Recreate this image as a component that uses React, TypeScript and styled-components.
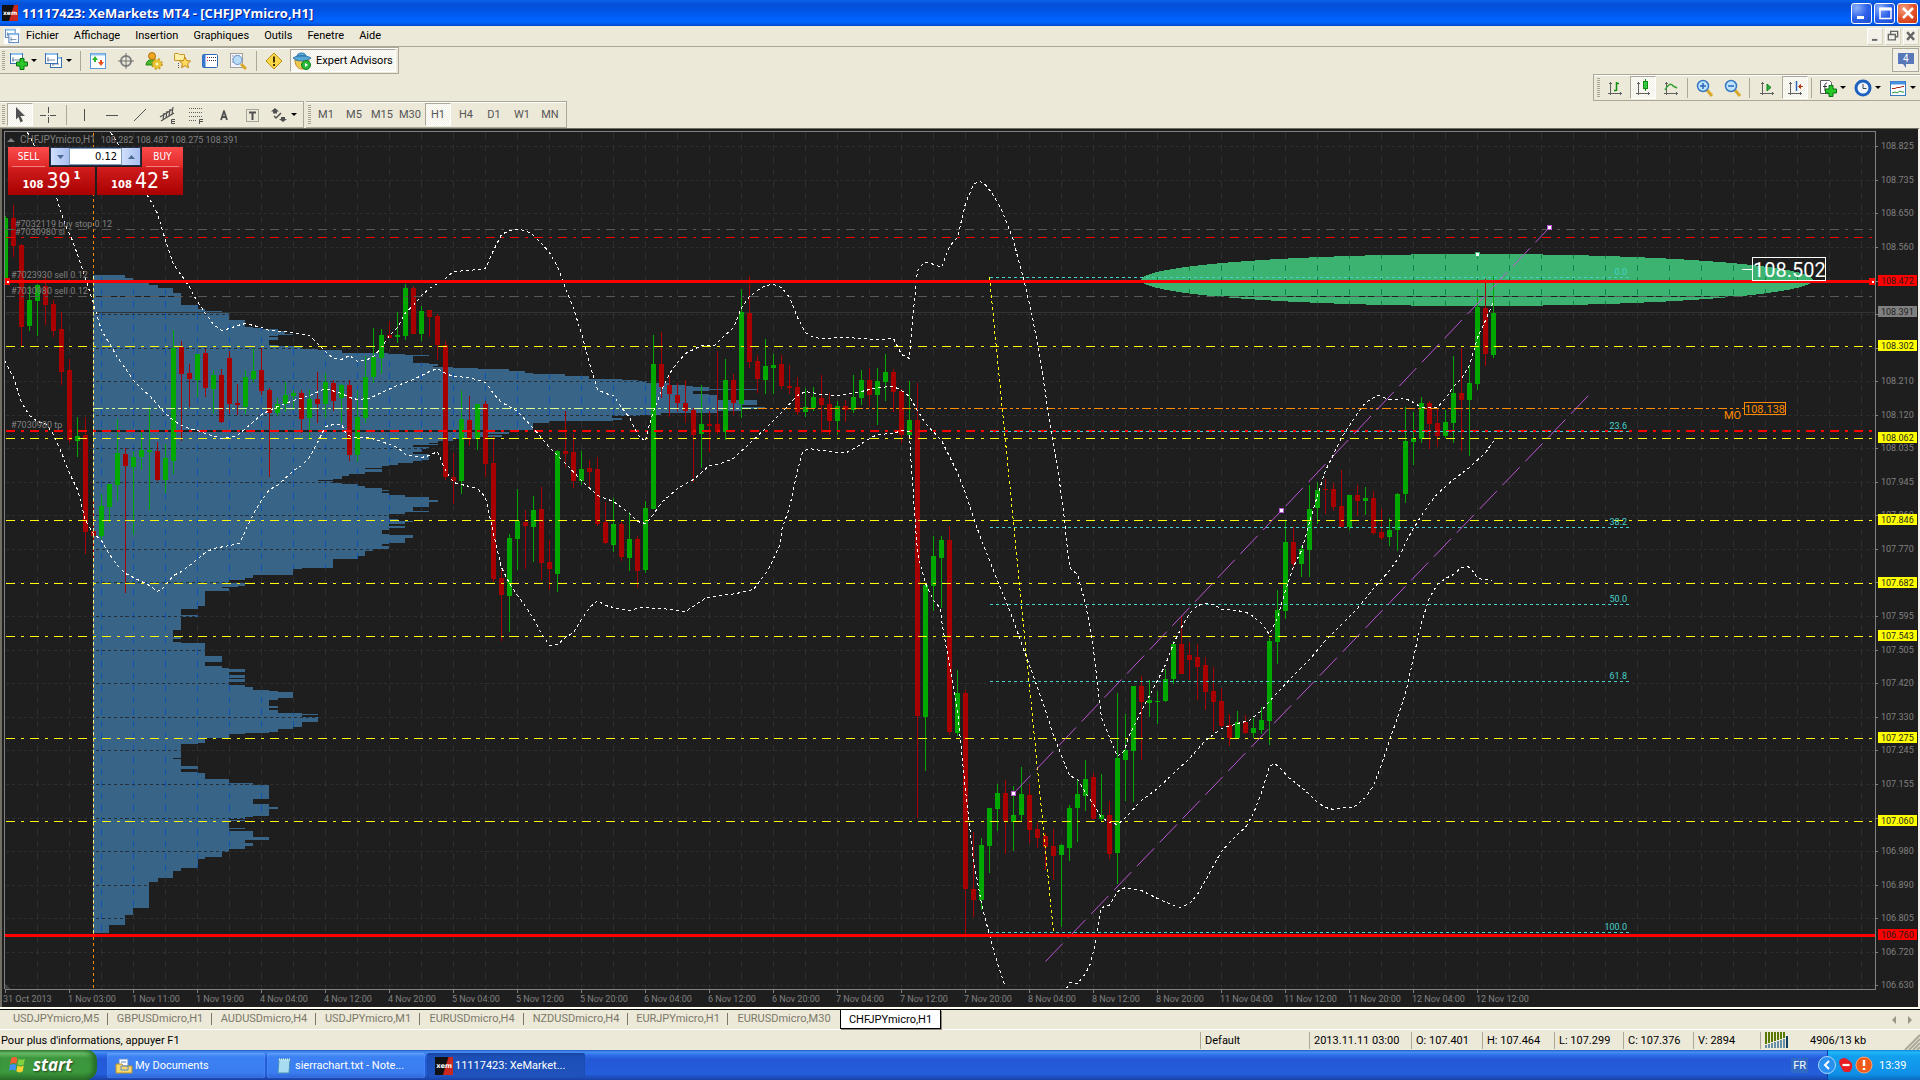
import React from "react";
import styled, { createGlobalStyle, css } from "styled-components";

const UI = 'Roboto, "Open Sans", sans-serif';
const CAPTION = '"DejaVu Sans Condensed", "DejaVu Sans", sans-serif';
const FACE = "#ece9d8";
const SHADOW = "#aca899";

const Global = createGlobalStyle`
  *, *::before, *::after { box-sizing: border-box; }
  html, body, #root { height: 100%; }
  body { margin: 0; overflow: hidden; background: ${FACE}; font-family: ${UI}; font-size: 11px; color: #000; }
  button { font: inherit; color: inherit; margin: 0; padding: 0; border: 0; background: none; }
`;

const Screen = styled.div`
  display: flex;
  flex-direction: column;
  height: 100vh;
  background: ${FACE};
`;

/* ---------- title bar ---------- */

const TitleBar = styled.header`
  display: flex;
  align-items: center;
  gap: 4px;
  height: 26px;
  padding: 0 2px;
  flex: none;
  background: linear-gradient(#0a62e8 0, #0450d8 4px, #0054e3 10px, #0060fc 18px, #0066ff 22px, #0046c8 26px);
`;

const TitleText = styled.h1`
  flex: 1;
  margin: 0;
  font: bold 13px/24px "Open Sans", ${UI};
  color: #fff;
  text-shadow: 1px 1px 0 #0a1883;
  white-space: pre;
`;

const CaptionButton = styled.button<{ $close?: boolean }>`
  display: grid;
  place-items: center;
  width: 21px;
  height: 21px;
  border: 1px solid #fff;
  border-radius: 3px;
  background: ${(p) =>
    p.$close
      ? "radial-gradient(circle at 30% 25%, #f0a080, #e4552c 50%, #c43010)"
      : "radial-gradient(circle at 25% 20%, #8cb0fa, #2e62ea 50%, #1a4bd0)"};
`;

const Captions = styled.div`
  display: flex;
  gap: 2px;
`;

/* ---------- menu ---------- */

const MenuBar = styled.nav`
  display: flex;
  align-items: center;
  height: 21px;
  flex: none;
  padding: 0 1px 0 4px;
  border-bottom: 1px solid ${SHADOW};
`;

const MenuItem = styled.button`
  padding: 0 3px 0 6px;
  margin-right: 6px;
  line-height: 18px;
`;

const MdiButtons = styled.div`
  display: flex;
  gap: 2px;
  margin-left: auto;
`;

const MdiButton = styled.button`
  display: grid;
  place-items: center;
  width: 16px;
  height: 17px;
  background: #f4f2e8;
  border: 1px solid #fff;
  border-right-color: #d8d4c0;
  border-bottom-color: #d8d4c0;
`;

/* ---------- toolbars ---------- */

const ToolRow = styled.div`
  display: flex;
  height: 27px;
  flex: none;
`;

const Divider = styled.i`
  width: 1px;
  height: 20px;
  margin: 0 3px 0 4px;
  background: ${SHADOW};
`;

const Toolbar = styled.div<{ $right?: boolean }>`
  display: flex;
  align-items: center;
  height: 27px;
  padding: 0 2px 0 2px;
  margin-right: 2px;
  border: 1px solid ${SHADOW};
  border-left: 0;
  box-shadow: inset 0 1px 0 #fff;
  ${(p) =>
    p.$right &&
    css`
      margin: 0 0 0 auto;
      padding: 0 0 0 3px;
      border-left: 1px solid ${SHADOW};
      border-right: 0;
      ${Divider} {
        margin: 0 3px 0 2px;
      }
    `}
`;

const Grip = styled.i`
  width: 3px;
  height: 20px;
  margin-right: 1px;
  background: repeating-linear-gradient(#a8a595 0 1px, ${FACE} 1px 2px);
`;

const checker = css`
  background: repeating-conic-gradient(#fff 0 25%, #f1eee2 0 50%) 0 0 / 2px 2px;
  border: 1px solid ${SHADOW};
  border-right-color: #fff;
  border-bottom-color: #fff;
`;

const ToolButton = styled.button<{ $on?: boolean; $drop?: boolean; $text?: boolean }>`
  display: flex;
  align-items: center;
  justify-content: center;
  gap: ${(p) => (p.$text ? "5px" : "3px")};
  height: 23px;
  width: ${(p) => (p.$text ? "auto" : p.$drop ? "35px" : p.$on ? "26px" : "28px")};
  margin: ${(p) => (p.$text ? "0 0 0 2px" : p.$on ? "0 1px" : "0")};
  padding: ${(p) => (p.$text ? "0 2px" : "0")};
  color: ${(p) => (p.$text ? "#000" : "#555")};
  ${(p) => p.$on && checker}
`;

const Caret = styled.i`
  border: 3px solid transparent;
  border-top-color: #000;
  border-bottom: 0;
`;

const Badge = styled.button`
  display: grid;
  place-items: center;
  width: 27px;
  height: 24px;
  margin: 1px 1px 0 auto;
  background: #f2f0e6;
  border: 1px solid ${SHADOW};
`;

/* ---------- chart window ---------- */

const ChartFrame = styled.main`
  position: relative;
  flex: 1;
  min-height: 0;
  border: solid #716f64;
  border-width: 1px 2px 0;
  border-right-color: #f4f2e8;
  background: #1e1e1e;
`;

const ChartSvg = styled.svg`
  display: block;
  width: 100%;
  height: 100%;
  font-family: ${UI};
  font-size: 9px;
`;

const FrameEdge = styled.div`
  height: 2px;
  flex: none;
  background: #fffef0;
`;

const Header = styled.div`
  position: absolute;
  left: 5px;
  top: 3px;
  display: flex;
  align-items: center;
  gap: 5px;
  font-size: 9px;
  line-height: 16px;
  color: #808080;
  white-space: pre;
`;

const SymbolName = styled.span`
  font-size: 10px;
`;

const UpMark = styled.i`
  border: 4px solid transparent;
  border-bottom-color: #808080;
  border-top: 0;
`;

const TradePanel = styled.form`
  position: absolute;
  left: 6px;
  top: 18px;
  display: flex;
  gap: 2px;
`;

const DealButton = styled.button<{ $side: "sell" | "buy" }>`
  display: flex;
  flex-direction: column;
  align-items: ${(p) => (p.$side === "sell" ? "flex-start" : "flex-end")};
  width: ${(p) => (p.$side === "sell" ? "87px" : "86px")};
  height: 48px;
  color: #fff;
  font-family: ${CAPTION};
  background: linear-gradient(#fb4c4c 0, #e02828 20px, #d01c1c 21px, #a80000 48px);
  clip-path: ${(p) =>
    p.$side === "sell"
      ? "polygon(0 0, 41px 0, 41px 20px, 100% 20px, 100% 100%, 0 100%)"
      : "polygon(45px 0, 100% 0, 100% 100%, 0 100%, 0 20px, 45px 20px)"};
`;

const DealName = styled.span`
  width: 33px;
  margin: 0 4px;
  font-size: 10px;
  line-height: 19px;
  text-align: center;
  border-bottom: 1px solid #f08080;
`;

const DealPrice = styled.span`
  display: flex;
  align-items: baseline;
  align-self: center;
  gap: 3px;
  font-size: 21px;
  line-height: 28px;
  b {
    font: bold 10px/12px "DejaVu Sans", sans-serif;
  }
  sup {
    align-self: flex-start;
    font: bold 10px/18px "DejaVu Sans", sans-serif;
  }
`;

const Volume = styled.div`
  position: absolute;
  left: 42px;
  top: 0;
  display: flex;
  width: 91px;
  height: 19px;
  border: 1px solid #26324c;
`;

const VolumeStep = styled.button`
  display: grid;
  place-items: center;
  width: 18px;
  background: linear-gradient(90deg, #d0defc, #a8c0f0);
`;

const VolumeInput = styled.input`
  flex: 1;
  min-width: 0;
  padding: 0 4px;
  border: 1px solid #7f9db9;
  background: #fff;
  font: 11px ${CAPTION};
  text-align: right;
`;

/* ---------- tabs, status bar ---------- */

const Tabs = styled.div`
  display: flex;
  align-items: stretch;
  height: 21px;
  flex: none;
  padding-left: 4px;
  border-top: 1px solid #000;
  border-bottom: 1px solid #fff;
`;

const Tab = styled.button<{ $active?: boolean; $w: number }>`
  position: relative;
  width: ${(p) => p.$w}px;
  color: ${(p) => (p.$active ? "#000" : "#7b786a")};
  line-height: 17px;
  padding-bottom: 2px;
  &::after {
    content: "";
    position: absolute;
    right: 0;
    top: 3px;
    height: 12px;
    border-right: 1px solid #7b786a;
  }
  &:nth-last-of-type(2)::after {
    display: none;
  }
  ${(p) =>
    p.$active &&
    css`
      height: 19px;
      padding: 0;
      background: #fff;
      border: 1px solid #000;
      border-top: 0;
      box-shadow: 1px 1px 0 #8d8a7c;
      &::after {
        display: none;
      }
    `}
`;

const TabArrows = styled.div`
  display: flex;
  gap: 12px;
  align-items: center;
  margin: 0 8px 0 auto;
`;

const StatusBar = styled.footer`
  display: flex;
  height: 20px;
  flex: none;
  padding: 2px 0 1px 1px;
  line-height: 18px;
`;

const StatusCell = styled.span<{ $w?: number }>`
  flex: ${(p) => (p.$w ? "none" : "1")};
  width: ${(p) => (p.$w ? p.$w + "px" : "auto")};
  padding-left: ${(p) => (p.$w ? "4px" : "0")};
  border-left: ${(p) => (p.$w ? `1px solid ${SHADOW}` : "0")};
  white-space: nowrap;
`;

const Traffic = styled(StatusCell)`
  display: flex;
  gap: 21px;
`;

/* ---------- taskbar ---------- */

const TaskBar = styled.footer`
  display: flex;
  align-items: stretch;
  height: 30px;
  flex: none;
  color: #fff;
  background: linear-gradient(#1f56c0 0, #4490f4 2px, #2f70e8 5px, #2458d6 9px, #245edb 24px, #1941a5 30px);
`;

const Start = styled.button`
  display: flex;
  align-items: center;
  gap: 5px;
  width: 97px;
  padding: 0 0 1px 9px;
  margin-right: 10px;
  border-radius: 0 10px 12px 0;
  background: linear-gradient(#3a8b3a 0, #6cc06c 3px, #3c963c 8px, #3c9a3c 22px, #2a702a 30px);
  box-shadow: inset -4px 0 5px #256b25;
  font: italic bold 17px "Open Sans", sans-serif;
  color: #fff;
  text-shadow: 1px 1px 2px #204020;
`;

const Task = styled.button<{ $active?: boolean }>`
  display: flex;
  align-items: center;
  gap: 2px;
  width: 158px;
  height: 25px;
  margin: 3px 2px 0 0;
  padding: 0 8px;
  border-radius: 3px;
  white-space: nowrap;
  background: ${(p) =>
    p.$active
      ? "linear-gradient(#1a44a4, #1c4fb6 4px, #1f52bc)"
      : "linear-gradient(#5f9cfb, #3c81f3 4px, #3a7cf0 20px, #2c64d8)"};
  box-shadow: inset 0 0 1px ${(p) => (p.$active ? "#0c2e78" : "#9cc4ff")};
`;

const Lang = styled.span`
  align-self: center;
  margin: 0 19px 0 auto;
  padding: 0 2px;
  line-height: 15px;
  background: #316ac5;
`;

const Tray = styled.div`
  display: flex;
  align-items: center;
  width: 93px;
  gap: 1px;
  border-left: 1px solid #0a3fa8;
  background: linear-gradient(#0c80d8 0, #20b8f8 2px, #12a0ee 6px, #0f90e8 24px, #0c6ac0 30px);
  svg:first-child {
    margin: 0 1px 0 -10px;
  }
  time {
    margin-left: 5px;
  }
`;

/* ---------- chart data ---------- */

type Candle = [up: 0 | 1, high: number, top: number, bottom: number, low: number];
type Point = [number, number];
/* A run of hourly bars: index of the first bar, y offset of the pane, heights in thirds of a pixel. */
type Run = { first: number; base: number; bars: Candle[] };

const RUNS: Run[] = [
  { first: 0, base: 200, bars: [
    [1,45,52,240,240],[0,12,52,135,168],[0,128,132,377,438],[1,255,297,375,390],[1,248,252,299,405],[0,225,255,311,372],
    [0,297,309,389,408],[0,333,384,513,552],[0,474,507,717,725],[1,648,705,719,768],[0,647,702,993,1058],[0,895,990,1004,1071],
    [1,880,915,1005,1014],[1,850,850,917,965],[1,653,755,852,900],[0,741,759,795,1176],[1,750,767,797,1002],[1,690,747,767,806],
    [1,618,747,752,928],[0,723,750,837,840],[1,730,770,837,876],[1,387,441,779,820],[0,420,438,518,720],[0,489,516,534,618],
    [1,460,460,537,587],[0,444,456,560,588],[1,507,522,563,640],[0,504,522,662,666],[0,450,471,608,640],[0,548,606,611,642],
    [1,507,528,617,640],[1,440,510,534,545],[0,440,507,570,582],[0,561,567,635,828],[1,592,609,635,645],[1,544,582,609,633],
    [1,568,576,585,627],[0,567,576,654,695],[1,567,593,651,717],[0,513,594,609,666],[1,516,543,609,650],[0,537,546,600,630],
    [1,550,552,592,666],[0,537,552,762,780],[1,567,648,762,783],[1,465,528,651,665],[1,381,468,528,546],[1,384,402,471,519],
    [0,360,402,411,411],[1,333,402,408,426],[1,248,261,405,416],[0,255,261,399,399],[1,315,330,399,420],[0,327,327,348,408],
    [0,339,345,432,477],[0,420,432,828,836],[0,755,828,840,910],[1,570,654,840,880],[0,585,657,714,735],[1,609,609,714,747],
    [0,600,609,789,827],[0,706,786,1133,1142],[0,1105,1131,1182,1320],[1,999,1011,1185,1293],[1,864,960,1014,1107],[0,927,963,975,1104],
    [1,885,927,978,1083],[0,858,924,1085,1137],[0,1017,1083,1104,1168],[1,747,750,1119,1173],[0,630,750,759,797],[0,699,753,839,861],
    [1,750,804,839,851],[0,777,801,812,857],[0,768,804,969,974],
  ] },
  { first: 75, base: 160, bars: [
    [0,1023,1083,1146,1150],[1,1012,1089,1152,1173],[0,1083,1089,1188,1200],[1,1052,1134,1191,1230],[0,1126,1134,1229,1280],
    [1,1020,1041,1226,1236],[1,522,609,1044,1044],[0,513,609,678,710],[0,645,672,699,768],[0,667,702,726,752],[0,657,726,750,786],
    [0,741,747,822,963],[1,672,789,819,921],[0,750,789,795,874],[0,570,789,813,819],[1,594,657,813,836],[0,639,657,726,762],
    [1,384,453,730,770],[0,345,456,603,621],[0,582,600,654,696],[1,534,615,657,699],[1,579,612,621,699],[0,582,609,675,684],
    [0,612,675,681,699],[0,648,678,753,762],[1,682,738,753,768],[1,678,708,741,750],[0,642,711,732,815],[0,696,729,780,822],
    [1,720,735,780,822],[0,716,735,747,783],[1,642,708,747,756],[1,627,657,711,733],[0,621,657,702,738],[1,621,660,702,792],
    [1,579,633,663,720],[0,624,633,693,753],[0,684,690,822,846],[1,660,777,822,822],[0,666,777,1665,1971],
  ] },
  { first: 115, base: 540, bars: [
    [1,132,132,528,690],[1,-15,45,135,210],[1,-14,-3,51,201],[0,-45,-3,573,582],[1,387,456,576,585],[0,447,456,1044,1180],
    [0,873,1044,1077,1128],[1,891,912,1077,1107],[1,800,801,915,996],[1,729,756,804,870],[0,717,756,840,939],[1,735,822,843,930],
    [1,678,759,822,840],[0,729,762,867,906],[0,845,864,891,921],[0,876,885,918,988],[0,864,915,945,1017],[1,909,912,942,1158],
    [1,792,801,921,960],[1,717,759,801,903],[1,657,714,766,810],[0,696,708,834,834],[1,699,822,834,843],[0,780,822,939,953],
    [1,456,651,936,1029],[1,519,627,657,780],[1,435,435,630,783],[0,405,435,483,657],[1,417,477,486,528],[1,450,480,483,549],
    [1,384,414,480,483],[1,300,309,414,430],[0,225,309,399,399],[0,304,342,357,418],[0,309,348,378,477],[0,348,372,453,507],
    [0,378,450,483,570],[0,441,480,555,564],[0,519,552,591,615],[1,510,543,591,594],[0,522,543,576,580],[1,531,561,576,592],
    [1,498,537,567,579],[1,290,300,540,612],
  ] },
  { first: 159, base: 200, bars: [
    [1,1167,1227,1323,1390],[1,960,1023,1230,1254],[0,978,1023,1089,1104],[1,1035,1044,1089,1128],[1,852,924,1047,1128],[1,843,867,921,969],
    [0,833,864,867,939],[0,846,864,918,930],[0,807,915,978,978],[1,882,882,978,987],[0,852,882,900,945],[1,858,891,900,942],
    [0,870,891,996,1001],[0,924,993,1011,1017],[1,951,987,1008,1035],[1,876,879,987,1050],[1,618,720,879,906],[1,633,711,723,792],
    [1,588,606,714,726],[0,600,606,669,744],[0,624,666,705,738],[1,627,663,705,712],[1,465,576,666,726],[0,441,576,597,750],
    [1,492,546,597,765],[1,279,318,549,567],[0,234,321,459,495],[1,225,336,462,471],
  ] },
];

const third = (base: number, v: number) => base + Math.round(v / 3);

function candlePath(up: 0 | 1, part: "wick" | "body") {
  let d = "";
  for (const run of RUNS) {
    run.bars.forEach((bar, i) => {
      if (bar[0] !== up) return;
      const x = 5 + 8 * (run.first + i);
      const a = third(run.base, part === "wick" ? bar[1] : bar[2]);
      const b = third(run.base, part === "wick" ? bar[4] : bar[3]);
      d += `M${x} ${a}V${Math.max(b, a + 1)}`;
    });
  }
  return d;
}

/* Band pieces: pane offset x, pane offset y, horizontal density, points. */
type Piece = [number, number, number, Point[]];

const UPPER: Piece[] = [
  [0, 0, 3, [[330,395],[345,418],[365,450],[400,520],[450,600]]],
  [0, 200, 2.45, [[368,0],[385,38],[405,120],[425,193],[445,225],[462,255],[480,295],[503,340],[523,372],[543,390],[562,384],[582,376],[601,370],[641,382],[660,389],[700,394],[758,406],[797,452],[817,474],[837,478],[856,466],[876,484],[895,480],[915,468],[935,440],[954,405],[974,380],[993,335],[1013,315],[1033,285],[1052,263],[1072,250],[1091,234],[1111,214],[1150,211],[1189,205],[1209,150],[1229,102],[1248,90],[1268,86],[1287,90],[1307,106],[1327,130],[1346,157],[1366,197],[1385,265],[1405,325],[1425,400],[1444,490],[1464,568],[1483,578],[1503,584],[1523,620],[1542,650]]],
  [600, 160, 2.45, [[92,822],[111,842],[119,800],[131,752],[151,690],[170,640],[190,605],[209,580],[229,567],[249,556],[280,554],[300,530],[327,500],[347,440],[366,408],[386,390],[405,376],[425,372],[445,382],[464,410],[484,470],[503,516],[523,530],[543,533],[601,532],[680,536],[719,535],[739,582],[758,595],[766,480],[778,330],[790,312],[800,307],[820,312],[837,322],[856,258],[876,230],[895,130],[915,72],[928,62],[940,66],[960,95],[980,140],[997,185],[1013,240],[1025,300],[1040,365],[1060,470],[1080,600],[1100,760],[1120,920],[1135,1050]]],
  [880, 540, 2.45, [[457,0],[462,50],[466,85],[485,103],[503,190],[515,270],[525,350],[535,460],[543,530],[562,590],[582,648],[598,630],[610,590],[640,510],[660,465],[680,420],[700,372],[719,310],[739,262],[758,220],[778,195],[797,190],[820,192],[837,207],[876,211],[905,220],[935,250]]],
  [1240, 200, 2.306, [[68,1303],[86,1250],[105,1170],[123,1098],[142,1050],[160,965],[179,885],[197,810],[215,762],[234,712],[252,676],[271,638],[289,606],[308,590],[320,585],[345,596],[363,598],[382,594],[400,607],[418,621],[455,620],[474,594],[492,558],[511,535],[529,495],[547,410],[566,360],[585,303]]],
];

const MIDDLE: Piece[] = [
  [0, 0, 3, [[82,395],[100,430],[130,510],[168,590],[182,630]]],
  [0, 200, 2.45, [[160,75],[178,120],[195,180],[209,235],[229,310],[249,390],[268,430],[288,470],[307,505],[327,540],[347,565],[366,585],[386,612],[405,640],[425,660],[445,675],[464,685],[484,690],[503,700],[543,714],[582,704],[601,685],[641,641],[680,618],[719,600],[758,586],[797,564],[837,579],[856,592],[876,597],[905,594],[935,576],[974,555],[1013,538],[1052,514],[1072,505],[1091,518],[1111,527],[1150,531],[1189,546],[1209,578],[1229,606],[1248,618],[1268,633],[1307,684],[1346,740],[1385,790],[1425,840],[1464,885],[1503,904],[1542,938]]],
  [600, 160, 2.45, [[92,1084],[111,1088],[123,1075],[150,1027],[190,984],[229,957],[268,916],[290,911],[327,893],[366,850],[405,805],[445,755],[484,705],[503,692],[543,701],[582,704],[601,703],[640,692],[680,680],[719,678],[739,690],[758,707],[778,750],[797,790],[837,840],[876,935],[895,1000],[915,1070],[935,1140]]],
  [880, 540, 2.45, [[268,60],[288,120],[307,180],[327,240],[347,310],[366,375],[386,440],[405,510],[425,585],[445,645],[464,705],[484,718],[503,755],[523,792],[543,830],[562,846],[582,852],[601,830],[640,780],[680,745],[719,700],[758,655],[797,600],[837,564],[876,548],[905,540],[935,510],[974,455],[1013,405],[1052,358],[1091,300],[1131,253],[1170,205],[1209,145],[1248,90],[1272,48]]],
  [1240, 200, 2.306, [[382,1025],[400,985],[418,945],[437,910],[455,880],[492,838],[529,800],[566,755],[585,722]]],
];

const LOWER: Piece[] = [
  [0, 200, 2.45, [[12,480],[33,530],[53,605],[72,645],[92,663],[111,670],[131,702],[151,755],[170,820],[190,868],[209,960],[229,1000],[249,1020],[268,1062],[288,1095],[307,1118],[327,1130],[347,1143],[366,1156],[386,1172],[400,1160],[425,1125],[445,1113],[464,1095],[503,1055],[523,1044],[562,1035],[586,1028],[601,990],[621,940],[641,900],[660,868],[680,854],[719,810],[739,795],[758,770],[778,725],[797,678],[817,672],[837,672],[846,695],[860,712],[900,710],[935,724],[974,740],[993,762],[1033,770],[1052,766],[1072,752],[1091,810],[1111,845],[1131,852],[1150,858],[1170,864],[1189,890],[1209,1000],[1229,1100],[1248,1150],[1268,1185],[1282,1210],[1307,1255],[1327,1300],[1346,1335],[1366,1333],[1385,1310],[1405,1297],[1425,1258],[1444,1222],[1464,1200],[1483,1215],[1503,1222],[1542,1231],[1568,1220],[1620,1224],[1680,1233],[1730,1191],[1805,1179],[1845,1167],[1884,1107],[1913,1029]]],
  [600, 160, 2.45, [[445,1110],[464,1040],[484,930],[495,875],[510,865],[543,869],[582,877],[603,877],[625,860],[660,835],[680,822],[719,818],[739,810],[758,812],[760,880],[770,1050]]],
  [880, 540, 2.45, [[89,0],[95,50],[111,130],[131,180],[147,205],[151,240],[170,375],[190,510],[209,750],[229,960],[249,1090],[268,1185],[288,1270],[307,1340]]],
];

const LOWER_RIGHT: Piece[] = [
  [880, 540, 2.45, [[457,1343],[464,1325],[484,1330],[503,1300],[515,1270],[525,1220],[535,1150],[543,1100],[562,1094],[582,1053],[601,1040],[640,1050],[680,1073],[719,1095],[735,1100],[758,1088],[778,1062],[797,1020],[817,975],[837,933],[857,905],[880,876],[895,862],[915,820],[935,755],[954,677],[966,670],[978,680],[1000,710],[1033,740],[1052,762],[1072,785],[1091,800],[1111,808],[1131,802],[1160,800],[1189,770],[1209,735],[1229,672],[1248,600],[1268,530],[1287,460],[1307,350],[1327,245],[1346,170],[1366,132],[1385,115],[1405,103],[1425,82],[1437,77],[1446,82],[1464,115],[1500,119]]],
];

const bandPath = (pieces: Piece[]) =>
  "M" +
  pieces
    .flatMap(([ox, oy, k, pts]) => pts.map(([x, y]) => `${Math.floor(ox + x / k)} ${third(oy, y)}`))
    .join("L");

/* Market profile steps: [y, right edge]. */
const PROFILE: Array<[number, Point[]]> = [
  [200, [[225,307],[234,327],[243,366],[254,386],[263,425],[278,443],[315,484],[327,503],[333,543],[336,503],[339,562],[360,601],[381,621],[385,641],[388,680],[393,699],[402,719],[406,680],[409,660],[411,680],[420,660],[435,680],[438,739],[447,778],[450,837],[459,876],[460,950],[463,993],[465,1052],[468,1013],[489,1052],[492,1072],[498,1060],[501,1111],[504,1170],[507,1248],[513,1287],[519,1307],[522,1385],[528,1444],[537,1523],[540,1562],[543,1584],[546,1582],[549,1638],[554,1680],[558,1699],[561,1738],[567,1855],[570,1738],[573,1699],[582,1738],[585,1758],[600,1855],[615,1817],[621,1875],[627,1817],[633,1758],[639,1620],[645,1568],[647,1500],[654,1523],[660,1503],[663,1346],[669,1307],[690,1268],[696,1248],[702,1190],[705,1229],[711,1170],[717,1111],[723,1072],[729,1052],[732,1072],[735,1013],[741,1052],[747,1033],[756,1013],[763,1052],[780,1033],[783,1013],[789,974],[795,954],[799,935],[804,895],[807,935],[815,895],[822,856],[828,837],[837,817],[840,778],[844,817],[849,837],[852,876],[858,895],[864,935],[870,954],[873,935],[878,954],[884,993],[890,1033],[891,1052],[900,1072],[906,1052],[921,1013],[933,1052],[936,993],[943,954],[957,974],[963,1013],[966,993],[972,954],[978,993],[984,954],[990,935],[1002,954],[1005,1013],[1014,993],[1028,954],[1032,935],[1038,954],[1047,915],[1053,895],[1068,876],[1077,817],[1104,739],[1107,719],[1125,621],[1134,601],[1140,562],[1150,601],[1158,582],[1162,543],[1165,562],[1173,503]]],
  [600, [[0,503],[18,484],[27,443],[45,484],[51,443],[90,425],[111,443],[117,425],[126,443],[129,503],[168,543],[186,503],[198,543],[204,562],[207,601],[216,562],[225,601],[234,562],[237,601],[246,562],[255,601],[261,621],[270,660],[273,680],[276,719],[294,680],[300,660],[318,680],[324,660],[330,680],[339,739],[342,778],[345,739],[351,778],[366,739],[381,719],[387,680],[396,660],[399,601],[402,562],[414,503],[429,484],[432,443],[474,425],[477,443],[498,484],[507,443],[516,484],[519,503],[537,562],[549,621],[555,660],[597,621],[612,660],[621,680],[627,660],[648,621],[651,601],[657,562],[660,601],[663,562],[684,601],[687,562],[693,621],[711,660],[720,601],[729,621],[738,601],[747,562],[756,543],[771,503],[777,484],[804,443],[813,425],[834,386],[846,366],[924,327],[945,307],[975,268]]],
];

const profilePath =
  "M93 275" +
  PROFILE.flatMap(([base, rows]) => rows.map(([y, x]) => `V${third(base, y)}H${Math.round(x / 2.45)}`)).join("") +
  "V933H93Z";

const GRID_X = Array.from({ length: 58 }, (_, i) => 37 + 32 * i);
const GRID_Y = [146, 180, 213, 247, 281, 314, 348, 381, 415, 448, 482, 515, 549, 582, 616, 650, 683, 717, 750, 784, 818, 851, 885, 918, 952, 985];
const gridX = GRID_X.filter((x) => x < 1875).map((x) => `M${x} 132V989`).join("");
const gridY = GRID_Y.map((y) => `M5 ${y}H1875`).join("");

const PRICES: Array<[string, number]> = [
  ["108.825", 146], ["108.735", 180], ["108.650", 213], ["108.560", 247], ["108.210", 381], ["108.120", 415], ["108.035", 448],
  ["107.945", 482], ["107.860", 515], ["107.770", 549], ["107.595", 616], ["107.505", 650], ["107.420", 683], ["107.330", 717],
  ["107.245", 750], ["107.155", 784], ["106.980", 851], ["106.890", 885], ["106.805", 918], ["106.720", 952], ["106.630", 985],
];
const MARKS: Array<[string, number, string]> = [
  ["108.472", 281, "#ff0000"], ["108.391", 312, "#808080"], ["108.302", 346, "#ffff00"], ["108.062", 438, "#ffff00"],
  ["107.846", 520, "#ffff00"], ["107.682", 583, "#ffff00"], ["107.543", 636, "#ffff00"], ["107.275", 738, "#ffff00"],
  ["107.060", 821, "#ffff00"], ["106.760", 935, "#ff0000"],
];
const LEVELS = MARKS.filter((m) => m[2] === "#ffff00").map((m) => m[1]);
const FIB: Array<[string, number]> = [["0.0", 277], ["23.6", 431], ["38.2", 527], ["50.0", 604], ["61.8", 681], ["100.0", 932]];
const TIMES = [
  "31 Oct 2013", "1 Nov 03:00", "1 Nov 11:00", "1 Nov 19:00", "4 Nov 04:00", "4 Nov 12:00", "4 Nov 20:00", "5 Nov 04:00",
  "5 Nov 12:00", "5 Nov 20:00", "6 Nov 04:00", "6 Nov 12:00", "6 Nov 20:00", "7 Nov 04:00", "7 Nov 12:00", "7 Nov 20:00",
  "8 Nov 04:00", "8 Nov 12:00", "8 Nov 20:00", "11 Nov 04:00", "11 Nov 12:00", "11 Nov 20:00", "12 Nov 04:00", "12 Nov 12:00",
];
const ORDERS: Array<[string, number, number]> = [
  ["#7030980 sl", 15, 235], ["#7032119 buy stop 0.12", 15, 227], ["#7023930 sell 0.12", 11, 278],
  ["#7030980 sell 0.12", 11, 294], ["#7030980 tp", 11, 428],
];

function Handle({ x, y, c }: { x: number; y: number; c: string }) {
  return <rect x={x - 1} y={y - 1} width="4" height="4" fill="#fff" stroke={c} strokeWidth="1" />;
}

function PriceChart() {
  const dashDot = "9 6 3 6";
  return (
    <ChartSvg viewBox="2 129 1916 878" preserveAspectRatio="xMinYMin meet" role="img" aria-label="CHFJPYmicro H1">
      <defs>
        <clipPath id="profile"><path d={profilePath} /></clipPath>
        <clipPath id="zone"><ellipse cx="1477" cy="280" rx="336" ry="26" /></clipPath>
        <clipPath id="plot"><rect x="5" y="132" width="1870" height="857" /></clipPath>
      </defs>
      <rect x="2" y="129" width="1916" height="878" fill="#1e1e1e" />
      <g clipPath="url(#plot)" shapeRendering="crispEdges" fill="none">
        <g transform="translate(.5 .5)" stroke="#2e2e2e">
          <path d={gridX} strokeDasharray="6 6" />
          <path d={gridY} strokeDasharray="3 3" />
        </g>
        <path d={profilePath} fill="#386487" />
        <g clipPath="url(#profile)">
          <g transform="translate(.5 .5)">
            <path d={gridX} stroke="#0f54b0" strokeDasharray="6 6" />
            <path d={gridY} stroke="#26303a" strokeDasharray="3 3" />
            <path d="M93 296H1875" stroke="#1e1e1e" />
            <path d="M93 430.5H1875" stroke="#1e1e1e" strokeWidth="2" />
          </g>
        </g>
        <ellipse cx="1477" cy="280" rx="336" ry="26" fill="#3cb371" />
        <g clipPath="url(#zone)">
          <g transform="translate(.5 .5)">
            <path d={gridX} stroke="#128445" strokeDasharray="6 6" />
            <path d="M5 296H1875" stroke="#1e1e1e" />
          </g>
        </g>
        <g transform="translate(.5 .5)">
          <path d="M5 312H1875" stroke="#333" />
          <path d={candlePath(0, "wick")} stroke="#a80000" />
          <path d={candlePath(0, "body")} stroke="#a80000" strokeWidth="5" />
          <path d={candlePath(1, "wick")} stroke="#00a800" />
          <path d={candlePath(1, "body")} stroke="#00a800" strokeWidth="5" />
          <path d="M5 229H1875M5 296H1875" stroke="#585858" strokeDasharray={dashDot} />
          <path d="M5 237H1875" stroke="#f00" strokeDasharray={dashDot} />
          <path d="M93 132V989" stroke="#ff8c00" strokeDasharray="3 3" />
          <path d="M93 275V932" stroke="#e8ff90" strokeDasharray="3 3" />
          <path d="M93 408H757" stroke="#d8ff90" strokeDasharray="9 3 3 3 3 3" />
          <path d="M757 408H1744" stroke="#ff8c00" strokeDasharray="9 3 3 3 3 3" />
          <path d="M5 430.5H1875" stroke="#f00" strokeWidth="2" strokeDasharray={dashDot} />
          <path d={LEVELS.map((y) => `M5 ${y}H1875`).join("")} stroke="#ff0" strokeDasharray={dashDot} />
          <path d={FIB.map((f) => `M989 ${f[1]}H1628`).join("")} stroke="#48d1cc" strokeDasharray="3 3" />
          <path d="M989 277L1053 932" stroke="#ff0" strokeDasharray="3 3" />
          <path d="M1013 793L1549 227M1045 961L1588 395" stroke="#ba55d3" strokeDasharray="25 8" shapeRendering="auto" />
          <g stroke="#fff" strokeDasharray="3 3">
            <path d={bandPath(UPPER)} />
            <path d={bandPath(MIDDLE)} />
            <path d={bandPath(LOWER)} />
            <path d={bandPath(LOWER_RIGHT)} />
          </g>
        </g>
      </g>
      <g fill="#808080">
        {ORDERS.map(([t, x, y]) => <text key={t} x={x} y={y}>{t}</text>)}
      </g>
      <g shapeRendering="crispEdges">
        <path d="M5 281.500H1875M5 935.500H1875" stroke="#f00" strokeWidth="3" />
        <rect x="5" y="278" width="5" height="7" fill="#f00" /><rect x="7" y="281" width="2" height="2" fill="#fff" />
        <rect x="1869" y="278" width="6" height="7" fill="#f00" /><rect x="1872" y="281" width="2" height="2" fill="#fff" />
        <Handle x={1476} y={253} c="#3cb371" />
        <Handle x={1548} y={226} c="#ba55d3" />
        <Handle x={1280} y={509} c="#ba55d3" />
        <Handle x={1012} y={792} c="#ba55d3" />
        <path d="M4.500 989V131.500H1875.500V989.500H4.500" fill="none" stroke="#808080" />
        <path d={GRID_Y.map((y) => `M1876 ${y}.500h2`).join("") + TIMES.map((_, i) => `M${5 + 64 * i}.500 990v3`).join("")} stroke="#808080" />
        <path d="M5 989v-5l5 5z" fill="#404040" />
        <rect x="1752.500" y="257.500" width="73" height="23" fill="none" stroke="#fff" />
        <path d="M1742 269.500h10" stroke="#fff" />
        <rect x="1744.500" y="402.500" width="41" height="12" fill="none" stroke="#ff8c00" />
      </g>
      <g fill="#48d1cc" textAnchor="end">
        {FIB.map(([t, y]) => <text key={t} x="1627" y={y - 2}>{t}</text>)}
      </g>
      <text x="1753" y="277" fill="#fff" fontSize="20">108.502</text>
      <text x="1745" y="413" fill="#ff8c00" fontSize="11">108.138</text>
      <text x="1724" y="419" fill="#ff8c00" fontSize="11">MO</text>
      <g fill="#808080">
        {PRICES.map(([t, y]) => <text key={t} x="1881" y={y + 3}>{t}</text>)}
        {TIMES.map((t, i) => <text key={t} x={i ? 4 + 64 * i : 3} y="1002">{t}</text>)}
      </g>
      {MARKS.map(([t, y, c]) => (
        <g key={t}>
          <rect x="1878" y={y - 6} width="39" height="11" fill={c} />
          <text x="1881" y={y + 3} fill="#1e1e1e">{t}</text>
        </g>
      ))}
    </ChartSvg>
  );
}

/* ---------- icons ---------- */

function Glyph({ s = 18, label, children }: { s?: number; label?: string; children: React.ReactNode }) {
  return (
    <svg width={s} height={s} viewBox="0 0 18 18" fill="none" aria-label={label} aria-hidden={!label}>
      {children}
    </svg>
  );
}

const Brand = ({ s = 16 }: { s?: number }) => (
  <svg width={s} height={s} viewBox="0 0 16 16" aria-hidden>
    <rect width="16" height="16" fill="#111" />
    <path d="M16 0v16H7L12 0z" fill="#c8281e" />
    <text x="1" y="10" fontSize="6" fontWeight="bold" fill="#fff" fontFamily="DejaVu Sans">xem</text>
  </svg>
);

const Win = ({ x = 1, y = 2, w = 12, h = 10 }) => (
  <>
    <rect x={x + 0.5} y={y + 0.5} width={w} height={h} fill="#fff" stroke="#3a70b0" />
    <path d={`M${x + 1} ${y + 1}h${w - 1}`} stroke="#8fc0f0" strokeWidth="2" />
    <path d={`M${x + 3} ${y + 4}v${h - 5}M${x + 2} ${y + h - 3}h${w - 4}`} stroke="#7088a8" />
  </>
);
const Plus = ({ x = 6, y = 6 }) => (
  <path transform={`translate(${x} ${y})`} d="M4 .5h4v3.500h3.500v4H8v3.500H4V8H.5V4H4z" fill="#28c828" stroke="#0a7010" />
);
const axes = <path d="M4.500 3v13M2 14.500h14M3 4.500h3M14.500 13v3" stroke="#606060" />;

const NewChart = <Glyph><Win x={0} y={1} /><Plus /></Glyph>;
const Profiles = <Glyph><Win x={5} y={5} w={11} h={10} /><Win x={0} y={1} w={12} h={10} /></Glyph>;
const Market = <Glyph><rect x="1.500" y="1.500" width="15" height="15" fill="#fff" stroke="#5a9ad8" /><path d="M2 2.500h14" stroke="#8fc0f0" strokeWidth="2" /><path d="M6 4l3 4H7v2H5V8H3z" fill="#2cb82c" /><path d="M12 14l-3-4h2V8h2v2h2z" fill="#e8501c" /></Glyph>;
const Target = <Glyph><circle cx="9" cy="9" r="5" stroke="#808080" strokeWidth="2" /><path d="M9 1v16M1 9h16" stroke="#707070" /></Glyph>;
const Navigator = <Glyph><path d="M1 13c0-7 11-7 11 0z" fill="#48b828" stroke="#2a8818" /><circle cx="7" cy="4" r="3.500" fill="#f0a820" stroke="#b07010" /><circle cx="12" cy="12" r="3" fill="#fff8c0" stroke="#e8c030" strokeWidth="3" /><circle cx="12" cy="12" r="5" stroke="#c89818" strokeWidth="1.500" strokeDasharray="2 2" /></Glyph>;
const Favorites = <Glyph><path d="M1.500 2.500V1.500h4l1 1h5v6h-10z" fill="#fff0a8" stroke="#c89830" /><path d="M5.500 11v6" stroke="#555" strokeDasharray="1 1" /><path d="M12 5l1.600 3.600 4 .4-3 2.700.9 4-3.500-2-3.500 2 .9-4-3-2.700 4-.4z" fill="#ffd860" stroke="#c08818" /></Glyph>;
const Terminal = <Glyph><rect x="1.500" y="2.500" width="15" height="13" rx="1" fill="#fff" stroke="#2a68b8" /><path d="M3 3v12" stroke="#3878d0" strokeWidth="3" /><path d="M6 5.500h1M6 8.500h1" stroke="#e02020" /><path d="M8 5.500h7M8 8.500h7" stroke="#333" strokeDasharray="1 1" /></Glyph>;
const Tester = <Glyph><rect x="1.500" y="1.500" width="12" height="14" fill="#f4f4fa" stroke="#a0a0a0" /><path d="M4 3v9M7 3v9M10 3v9" stroke="#8898b8" strokeDasharray="2 1" /><circle cx="8.500" cy="8" r="4.500" fill="#b8dcf8" stroke="#6890c8" /><path d="M12 12l5 5" stroke="#d8a828" strokeWidth="3" /></Glyph>;
const Order = <Glyph><path d="M9 1l8 8-8 8-8-8z" fill="#f8d848" stroke="#c09010" /><path d="M9 4.500v6M9 12v2" stroke="#403000" strokeWidth="2" /></Glyph>;
const Expert = <Glyph><path d="M2 8c0 12 14 12 14 0z" fill="#f0c850" stroke="#c08820" /><path d="M0 6c5-3 13-3 18 0-4 4-14 4-18 0zM4 4c0-4 9-4 9 0z" fill="#58a8d8" stroke="#3078a8" /><circle cx="13" cy="13" r="4.500" fill="#28b838" stroke="#108020" /><path d="M12 11v4l3-2z" fill="#fff" /></Glyph>;
const Bars = <Glyph>{axes}<path d="M10.500 3v9M10 4.500h3M8 11.500h2" stroke="#109010" strokeWidth="1.500" /></Glyph>;
const Candles = <Glyph>{axes}<path d="M11.500 0v12" stroke="#109010" /><rect x="9.500" y="2.500" width="4" height="7" fill="#30c840" stroke="#109010" /></Glyph>;
const LineIcon = <Glyph>{axes}<path d="M3 11c3-6 6-7 8-4l4 2" stroke="#30a030" strokeWidth="1.500" /></Glyph>;
const Lens = ({ plus }: { plus?: boolean }) => <Glyph><path d="M11 11l5 6" stroke="#d8a828" strokeWidth="3" /><circle cx="7" cy="7" r="5.500" fill="#c0e4ff" stroke="#3878c0" strokeWidth="1.500" /><path d={plus ? "M4 7h6M7 4v6" : "M4 7h6"} stroke="#2868b8" strokeWidth="1.500" /></Glyph>;
const Scroll = <Glyph>{axes}<path d="M9 5l4 3.500L9 12z" fill="#30b040" stroke="#108018" /></Glyph>;
const Shift = <Glyph>{axes}<path d="M10.500 2v10" stroke="#2868b8" strokeWidth="1.500" /><path d="M17 7.500h-3M14.500 5.500v4l-2-2z" fill="#b83818" stroke="#b83818" /></Glyph>;
const Indicators = <Glyph><path d="M1.500 1.500h9l2 2v11h-11z" fill="#fff" stroke="#606060" /><path d="M8 4c-3 0-2 3-2 8M4 7.500h4" stroke="#333" /><Plus /></Glyph>;
const Clock = <Glyph><circle cx="9" cy="9" r="7" fill="#f0f6ff" stroke="#1c60c0" strokeWidth="3" /><path d="M9 5v4.500h3.500" stroke="#444" /></Glyph>;
const Template = <Glyph><rect x="1.500" y="2.500" width="15" height="14" fill="#fff" stroke="#3878c0" /><path d="M2 4h14" stroke="#4890e0" strokeWidth="3" /><path d="M3 9.500h3l2-1h3l2-1h2" stroke="#b02818" /><path d="M3 14l3-1 2 1 3-2 2 1h2" stroke="#209830" /></Glyph>;
const Cursor = <Glyph><path d="M5 1l9 9H9.500l2.500 5-2.500 1.500L7.500 11 5 13.500z" fill="#505050" /></Glyph>;
const Cross = <Glyph><path d="M9.500 1v6M9.500 11v6M1 9.500h6M11 9.500h6M9 9.500h1" stroke="#505050" /></Glyph>;
const VLine = <Glyph><path d="M9.500 3v12" stroke="#505050" /></Glyph>;
const HLine = <Glyph><path d="M3 9.500h12" stroke="#505050" /></Glyph>;
const Trend = <Glyph><path d="M3 15L15 3" stroke="#505050" /></Glyph>;
const Channel = <Glyph><path d="M1 11L14 3M2 15L15 7M5 7l-1 7M8 5l-1 7M11 3l-1 7M14 1l-1 7" stroke="#505050" strokeWidth="1.200" /><path d="M16 13.500h-3.500v4H16M13 15.500h3" stroke="#505050" /></Glyph>;
const FiboIcon = <Glyph><path d="M2 2.500h14M2 6.500h14M2 10.500h14M2 14.500h8" stroke="#606060" strokeDasharray="1 1" /><path d="M16 13.500h-3.500V18M13 15.500h3" stroke="#505050" /></Glyph>;
const LetterA = <Glyph><path d="M6 14L9 5l3 9M7 11h4" stroke="#505050" strokeWidth="1.800" strokeLinejoin="round" /></Glyph>;
const LabelT = <Glyph><rect x="3.500" y="3.500" width="12" height="12" stroke="#606060" strokeDasharray="1 1" /><path d="M6 6.500h7M9.500 6v8" stroke="#505050" strokeWidth="2" /></Glyph>;
const Arrows = <Glyph><path d="M5 2l4 3.500H7v2H3v-2H1zM13 16l-4-3h2v-2h4v2h2z" fill="#505050" /><path d="M4 10l2 2 5-5" stroke="#505050" strokeWidth="1.500" /></Glyph>;

const Flag = (
  <svg width="19" height="19" viewBox="0 0 18 18" aria-hidden>
    <path d="M2 3q3-2 6 0L7 8.500q-3-2-6 0z" fill="#f06030" /><path d="M9 3.500q3 2 6 0L14 9q-3 2-6 0z" fill="#80d040" />
    <path d="M1 9.500q3-2 6 0L6 15q-3-2-6 0z" fill="#4090f0" /><path d="M8 10q3 2 6 0l-1 5.500q-3 2-6 0z" fill="#f8d030" />
  </svg>
);

type Tool = [name: string, icon: React.ReactNode, on?: boolean, drop?: boolean] | null;

function Tools({ items }: { items: Tool[] }) {
  return (
    <>
      {items.map((t, i) =>
        t ? (
          <ToolButton key={i} type="button" title={t[0]} aria-label={t[0]} $on={t[2]} $drop={t[3]}>
            {t[1]}
            {t[3] && <Caret />}
          </ToolButton>
        ) : (
          <Divider key={i} />
        )
      )}
    </>
  );
}

const STANDARD: Tool[] = [
  ["Nouveau graphique", NewChart, false, true], ["Profils", Profiles, false, true], null, ["Cotations", Market], ["Fenetre de donnees", Target],
  ["Navigateur", Navigator], ["Favoris", Favorites], ["Terminal", Terminal], ["Testeur", Tester], null, ["Nouvel ordre", Order],
];
const CHARTS: Tool[] = [
  ["Barres", Bars], ["Bougies", Candles, true], ["Ligne", LineIcon], null, ["Zoom avant", <Lens plus />], ["Zoom arriere", <Lens />], null,
  ["Defilement", Scroll], ["Decalage", Shift, true], null, ["Indicateurs", Indicators, false, true], ["Periodes", Clock, false, true], ["Modeles", Template, false, true],
];
const LINES: Tool[] = [
  ["Curseur", Cursor, true], ["Reticule", Cross], null, ["Ligne verticale", VLine], ["Ligne horizontale", HLine], ["Ligne de tendance", Trend],
  ["Canal", Channel], ["Fibonacci", FiboIcon], ["Texte", LetterA], ["Etiquette", LabelT], ["Fleches", Arrows, false, true],
];
const PERIODS = ["M1", "M5", "M15", "M30", "H1", "H4", "D1", "W1", "MN"];
const TABS: Array<[string, number]> = [
  ["USDJPYmicro,M5", 104], ["GBPUSDmicro,H1", 104], ["AUDUSDmicro,H4", 104], ["USDJPYmicro,M1", 104], ["EURUSDmicro,H4", 104],
  ["NZDUSDmicro,H4", 104], ["EURJPYmicro,H1", 100], ["EURUSDmicro,M30", 112], ["CHFJPYmicro,H1", 101],
];

export default function App() {
  return (
    <Screen>
      <Global />
      <TitleBar>
        <Brand />
        <TitleText>11117423: XeMarkets MT4 - [CHFJPYmicro,H1]</TitleText>
        <Captions>
          <CaptionButton aria-label="Minimize"><Glyph><path d="M4 13.500h7" stroke="#fff" strokeWidth="3" /></Glyph></CaptionButton>
          <CaptionButton aria-label="Maximize"><Glyph><path d="M4 4.500h11v10H4z" stroke="#fff" strokeWidth="1.500" /><path d="M3.500 5h12" stroke="#fff" strokeWidth="3" /></Glyph></CaptionButton>
          <CaptionButton $close aria-label="Close"><Glyph><path d="M4 4l10 10M14 4L4 14" stroke="#fff" strokeWidth="2.500" /></Glyph></CaptionButton>
        </Captions>
      </TitleBar>
      <MenuBar>
        <Glyph s={16}><rect width="18" height="18" fill="#fff" /><Win x={1} y={1} w={11} h={9} /><Win x={5} y={6} w={11} h={10} /></Glyph>
        {["Fichier", "Affichage", "Insertion", "Graphiques", "Outils", "Fenetre", "Aide"].map((m) => (
          <MenuItem key={m}>{m}</MenuItem>
        ))}
        <MdiButtons>
          <MdiButton aria-label="Minimize chart"><Glyph s={14}><path d="M5 14h7" stroke="#666" strokeWidth="2.500" /></Glyph></MdiButton>
          <MdiButton aria-label="Restore chart"><Glyph s={14}><path d="M6 6V3h9v7h-3M3 7h9v7H3z" stroke="#666" strokeWidth="1.800" /></Glyph></MdiButton>
          <MdiButton aria-label="Close chart"><Glyph s={14}><path d="M4 4l9 10M13 4L4 14" stroke="#666" strokeWidth="3" /></Glyph></MdiButton>
        </MdiButtons>
      </MenuBar>
      <ToolRow>
        <Toolbar>
          <Grip />
          <Tools items={STANDARD} />
          <ToolButton type="button" $on $text>{Expert}Expert Advisors</ToolButton>
        </Toolbar>
        <Badge aria-label="4 messages">
          <Glyph><path d="M1 2h16v11H9v4l-3-4H1z" fill="#5878b8" /><text x="6" y="11" fontSize="10" fill="#fff">4</text></Glyph>
        </Badge>
      </ToolRow>
      <ToolRow>
        <Toolbar $right>
          <Grip />
          <Tools items={CHARTS} />
        </Toolbar>
      </ToolRow>
      <ToolRow>
        <Toolbar>
          <Grip />
          <Tools items={LINES} />
        </Toolbar>
        <Toolbar>
          <Grip />
          {PERIODS.map((p) => (
            <ToolButton key={p} type="button" $on={p === "H1"}>{p}</ToolButton>
          ))}
        </Toolbar>
      </ToolRow>
      <ChartFrame>
        <PriceChart />
        <Header>
          <UpMark />
          <SymbolName>CHFJPYmicro,H1</SymbolName>
          <span>108.282 108.487 108.275 108.391</span>
        </Header>
        <TradePanel onSubmit={(e) => e.preventDefault()}>
          <DealButton type="button" $side="sell">
            <DealName>SELL</DealName>
            <DealPrice><b>108</b>39<sup>1</sup></DealPrice>
          </DealButton>
          <DealButton type="button" $side="buy">
            <DealName>BUY</DealName>
            <DealPrice><b>108</b>42<sup>5</sup></DealPrice>
          </DealButton>
          <Volume>
            <VolumeStep type="button" aria-label="Less"><svg width="7" height="4"><path d="M0 0h7L3.500 4z" fill="#4a6a94" /></svg></VolumeStep>
            <VolumeInput aria-label="Volume" defaultValue="0.12" />
            <VolumeStep type="button" aria-label="More"><svg width="7" height="4"><path d="M0 4h7L3.500 0z" fill="#4a6a94" /></svg></VolumeStep>
          </Volume>
        </TradePanel>
      </ChartFrame>
      <FrameEdge />
      <Tabs>
        {TABS.map(([name, w], i) => (
          <Tab key={name} $w={w} $active={i === TABS.length - 1}>{name}</Tab>
        ))}
        <TabArrows>
          <svg width="4" height="8"><path d="M4 0v8L0 4z" fill="#999688" /></svg>
          <svg width="4" height="8"><path d="M0 0v8l4-4z" fill="#999688" /></svg>
        </TabArrows>
      </Tabs>
      <StatusBar>
        <StatusCell>Pour plus d'informations, appuyer F1</StatusCell>
        <StatusCell $w={109}>Default</StatusCell>
        <StatusCell $w={102}>2013.11.11 03:00</StatusCell>
        <StatusCell $w={71}>O: 107.401</StatusCell>
        <StatusCell $w={72}>H: 107.464</StatusCell>
        <StatusCell $w={69}>L: 107.299</StatusCell>
        <StatusCell $w={70}>C: 107.376</StatusCell>
        <StatusCell $w={67}>V: 2894</StatusCell>
        <Traffic $w={142}>
          <svg width="24" height="16" aria-hidden>
            {[0, 1, 2, 3, 4, 5, 6].map((i) => (
              <path key={i} d={`M${i * 3 + 1} 0v${12 - i}`} stroke="#5a7800" strokeWidth="2" />
            ))}
            {[0, 1, 2, 3, 4, 5, 6].map((i) => (
              <path key={i} d={`M${i * 3 + 1} 16v-${3 + i}`} stroke="#6890a8" strokeWidth="2" />
            ))}
            <path d="M22 4v12" stroke="#104060" strokeWidth="2" />
          </svg>
          4906/13 kb
        </Traffic>
        <svg width="18" height="18" aria-hidden><path d="M3 18L18 3M7 18L18 7M11 18l7-7M15 18l3-3" stroke={SHADOW} strokeWidth="2" /></svg>
      </StatusBar>
      <TaskBar>
        <Start>{Flag}start</Start>
        <Task>
          <Glyph><path d="M4 2h9v12H4z" fill="#fff" stroke="#6090d0" /><path d="M1 7h6l1 2h9v7H1z" fill="#f8d868" stroke="#b89030" /><path d="M6 5h5M6 9h7v4H6z" stroke="#5088d0" /></Glyph>
          My Documents
        </Task>
        <Task>
          <Glyph><path d="M4 2h11l-1 14H3z" fill="#a8dcf0" stroke="#4890b8" /><path d="M4 2.500h11" stroke="#d8f0f8" strokeWidth="2" strokeDasharray="1 1" /></Glyph>
          sierrachart.txt - Note...
        </Task>
        <Task $active>
          <Brand s={18} />
          11117423: XeMarket...
        </Task>
        <Lang>FR</Lang>
        <Tray>
          <Glyph><circle cx="9" cy="9" r="8.500" fill="#2a90f0" stroke="#a8d8ff" /><path d="M11 5L7 9l4 4" stroke="#fff" strokeWidth="2" /></Glyph>
          <Glyph s={16}><path d="M2 3q6-4 10 1 4 1 4 7-1 7-6 6-5 0-6-5-4-4-2-9z" fill="#e81c24" /><path d="M5 9h8" stroke="#fff" strokeWidth="2.500" /></Glyph>
          <Glyph><circle cx="9" cy="9" r="8" fill="#f05a18" stroke="#ffa070" /><path d="M9 4v6M9 12v2" stroke="#fff" strokeWidth="2.500" /></Glyph>
          <time>13:39</time>
        </Tray>
      </TaskBar>
    </Screen>
  );
}
